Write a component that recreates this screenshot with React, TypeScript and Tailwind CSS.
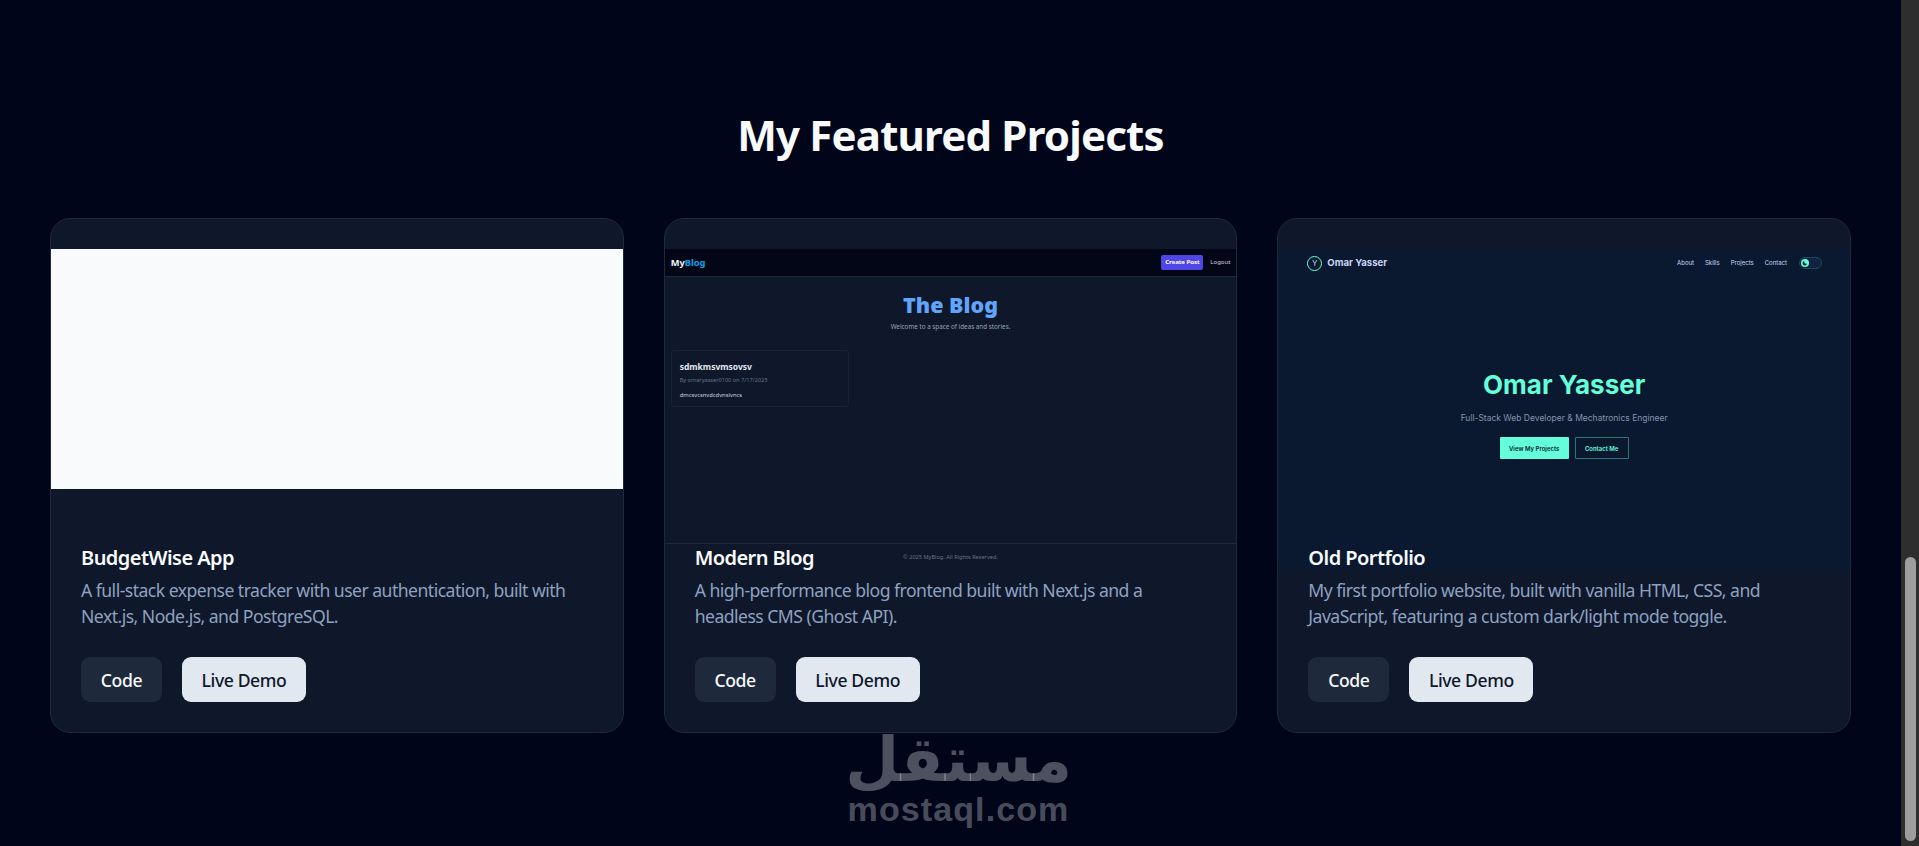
function BlogShot() {
  return (
    <div className="flex h-[322px] flex-col bg-[#0f172a] font-['Noto_Sans',sans-serif]">
      <div className="flex h-[28px] items-center justify-between border-b border-[#1e293b] bg-[#020617] pl-[6px] pr-[6px]">
        <span className="text-[9.3px] font-bold text-[#f1f5f9]">
          My<span className="text-[#0ea5e9]">Blog</span>
        </span>
        <div className="flex items-center gap-[7px]">
          <span className="flex h-[15px] w-[42px] items-center justify-center rounded-[2px] bg-[#4f46e5] text-[6px] font-bold text-white">Create Post</span>
          <span className="text-[6px] text-[#cbd5e1]">Logout</span>
        </div>
      </div>
      <div className="mt-[14px] text-center text-[21.5px] leading-[28px] font-black text-[#60a5fa]">The Blog</div>
      <div className="mt-[3px] text-center text-[6.3px] leading-[10px] text-[#94a3b8]">Welcome to a space of ideas and stories.</div>
      <div className="mt-[18px] ml-[6px] h-[57px] w-[178px] rounded-[3px] border border-[#1e293b]/70 pt-[9px] pl-[8px]">
        <div className="text-[8.5px] leading-[13px] font-bold text-[#e2e8f0]">sdmkmsvmsovsv</div>
        <div className="mt-[3px] text-[5.6px] leading-[8px] text-[#64748b]">By omaryasser0100 on 7/17/2025</div>
        <div className="mt-[7px] text-[5.8px] leading-[8px] text-[#cbd5e1]">dmcsvcsnvdcdvnsivncs</div>
      </div>
      <div className="mt-auto flex h-[28px] justify-center border-t border-[#1e293b] pt-[9px] text-[5.6px] leading-[8px] text-[#64748b]">
        © 2025 MyBlog. All Rights Reserved.
      </div>
    </div>
  );
}

function PortfolioShot() {
  return (
    <div className="flex h-[322px] flex-col items-center bg-[#0a192f] font-['Inter',sans-serif]">
      <div className="flex h-[28px] w-full items-center justify-between pr-[28px] pl-[29px]">
        <div className="flex items-center gap-[5px]">
          <span className="flex h-[15px] w-[15px] items-center justify-center rounded-full border border-[#64ffda] text-[8px] text-[#ccd6f6]">Y</span>
          <span className="text-[9.6px] font-bold text-[#ccd6f6]">Omar Yasser</span>
        </div>
        <div className="flex items-center gap-[12px]">
          <div className="flex gap-[11px] text-[6px] leading-[12px] text-[#ccd6f6]">
            <span>About</span>
            <span>Skills</span>
            <span>Projects</span>
            <span>Contact</span>
          </div>
          <span className="flex h-[12px] w-[23px] items-center rounded-full border border-[#1f4a5c] bg-[#112240] pl-[1px]">
            <span className="flex h-[8px] w-[8px] items-center justify-center rounded-full bg-[#64ffda]">
              <svg viewBox="0 0 24 24" className="h-[6px] w-[6px]" fill="#0a192f">
                <path d="M20 15A9 9 0 0 1 9 4a9 9 0 1 0 11 11z" />
              </svg>
            </span>
          </span>
        </div>
      </div>
      <div className="mt-[92px] text-[26px] leading-[32px] font-bold text-[#64ffda]">Omar Yasser</div>
      <div className="mt-[11px] text-[8.5px] leading-[12px] text-[#8892b0]">Full-Stack Web Developer &amp; Mechatronics Engineer</div>
      <div className="mt-[13px] flex gap-[6px] text-[6px] font-semibold">
        <span className="flex h-[22px] w-[69px] items-center justify-center rounded-[1px] bg-[#64ffda] text-[#0a192f]">View My Projects</span>
        <span className="flex h-[22px] w-[54px] items-center justify-center rounded-[1px] border border-[#64ffda]/40 text-[#64ffda]">Contact Me</span>
      </div>
    </div>
  );
}

function ProjectCard({ title, desc, shot }: { title: string; desc: string; shot: React.ReactNode }) {
  return (
    <div className="overflow-hidden rounded-[20px] border border-[#1e293b] bg-[#0f172a] pt-[30px]">
      <div className="h-[322px]">{shot}</div>
      <div className="relative -mt-[27px] px-[30px] pb-[30px]">
        <h3 className="text-[20px] leading-[28px] font-semibold tracking-[-0.55px] text-[#f8fafc]">{title}</h3>
        <p className="mt-[6px] h-[51px] text-[17.6px] leading-[25.5px] tracking-[-0.53px] text-[#8ea2c0]">{desc}</p>
        <div className="mt-[28px] flex gap-[20px] text-[17.6px] font-medium tracking-[-0.4px]">
          <a className="flex h-[45px] w-[81px] items-center justify-center rounded-[9px] bg-[#1e293b] pt-[2px] text-[#f8fafc]">Code</a>
          <a className="flex h-[45px] w-[124px] items-center justify-center rounded-[9px] bg-[#e2e8f0] pt-[2px] text-[#0f172a]">Live Demo</a>
        </div>
      </div>
    </div>
  );
}

export default function App() {
  return (
    <div className="relative flex h-[846px] overflow-hidden bg-[#01051a] font-['Noto_Sans',sans-serif]">
      <main className="flex-1 px-[50px] pt-[111px]">
        <h2 className="text-center text-[42px] leading-[48px] font-bold tracking-[-0.8px] text-[#f8fafc]">My Featured Projects</h2>
        <div className="mt-[59px] grid grid-cols-3 gap-10">
          <ProjectCard
            title="BudgetWise App"
            desc="A full-stack expense tracker with user authentication, built with Next.js, Node.js, and PostgreSQL."
            shot={<div className="h-[240px] bg-[#f8fafc]" />}
          />
          <ProjectCard
            title="Modern Blog"
            desc="A high-performance blog frontend built with Next.js and a headless CMS (Ghost API)."
            shot={<BlogShot />}
          />
          <ProjectCard
            title="Old Portfolio"
            desc="My first portfolio website, built with vanilla HTML, CSS, and JavaScript, featuring a custom dark/light mode toggle."
            shot={<PortfolioShot />}
          />
        </div>
      </main>
      <aside className="w-[18px] bg-[#2e2e2e] pt-[557px] pl-[4px]">
        <div className="h-[284px] w-[11px] rounded-full bg-[#9e9e9e]" />
      </aside>
      <div className="absolute top-[729px] left-[849px] flex w-[219px] flex-col items-center text-white/30">
        <span dir="rtl" className="font-['DejaVu_Sans',sans-serif] text-[62px] leading-[62px] font-bold">مستقل</span>
        <span className="font-['Liberation_Sans',sans-serif] text-[34px] leading-[36px] font-bold tracking-[1.1px]">mostaql.com</span>
      </div>
    </div>
  );
}
